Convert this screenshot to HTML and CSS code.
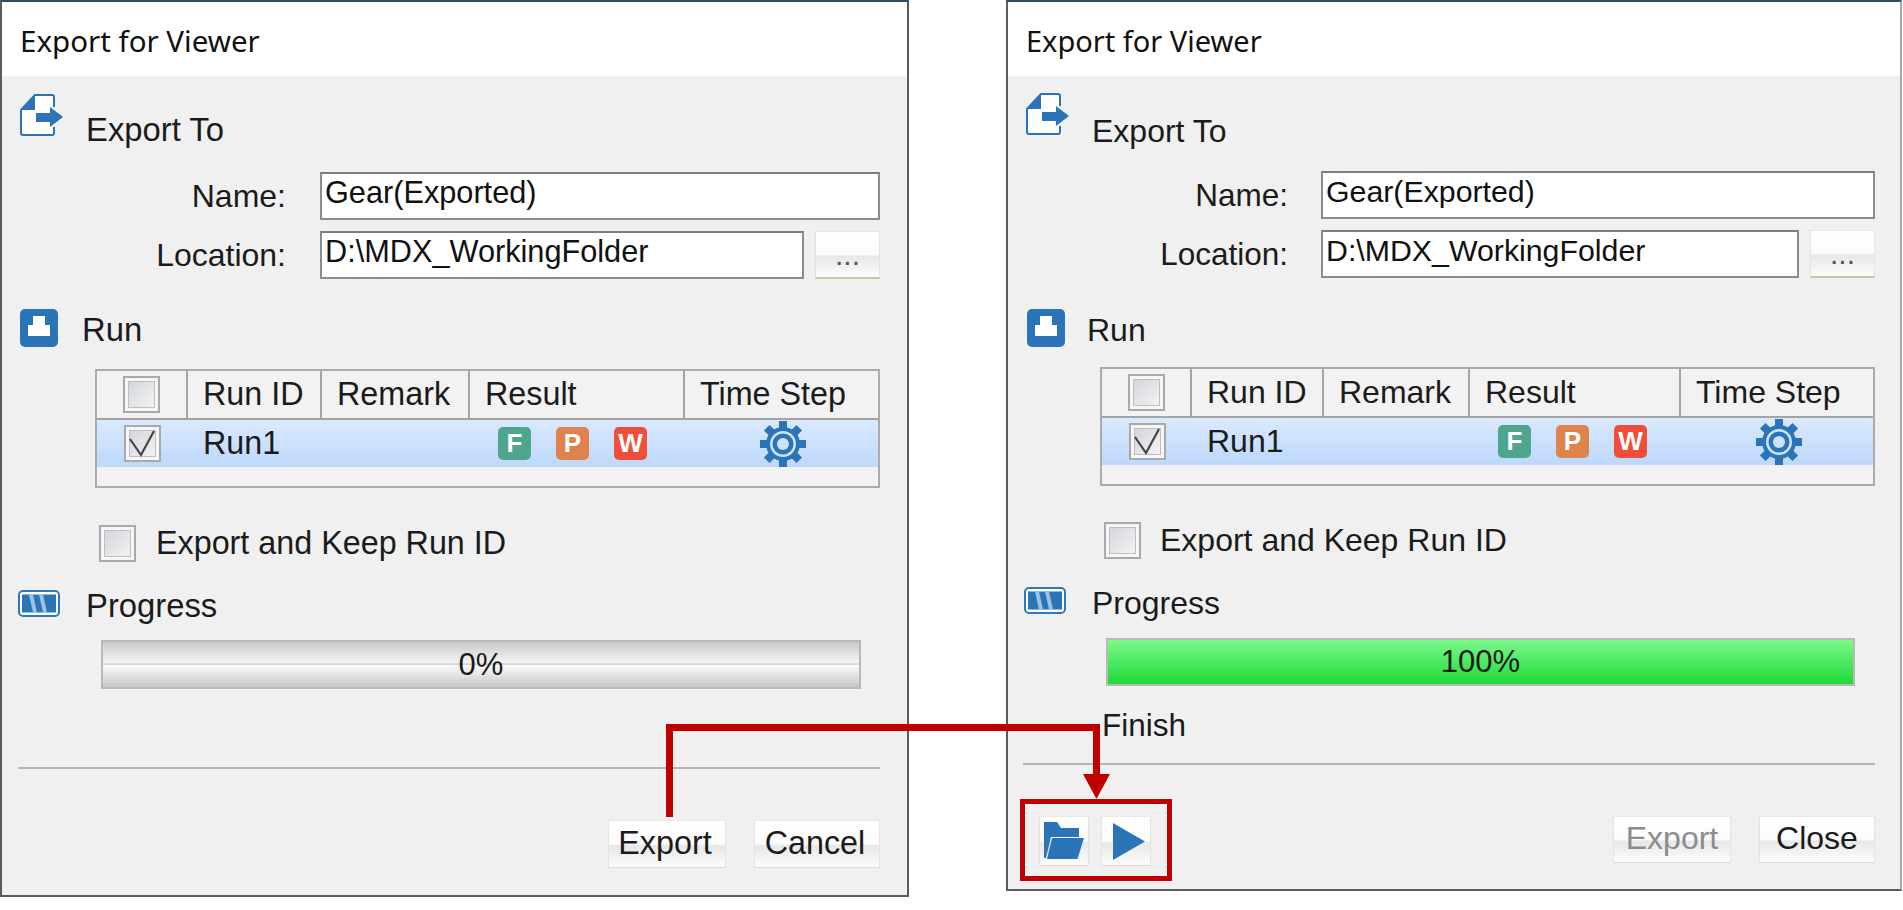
FILE: index.html
```html
<!DOCTYPE html>
<html lang="en">
<head>
<meta charset="utf-8">
<title>Export for Viewer</title>
<link rel="stylesheet" href="styles.css">
</head>
<body>
<main class="stage">

  <section class="dialog dialog-a">
    <header class="titlebar">Export for Viewer</header>
    <div class="head head-export">
      <svg class="ico ico-export" viewBox="0 0 43 42"><path class="ln" d="M34 13V3a2 2 0 0 0-2-2H15L1 16v23a2 2 0 0 0 2 2h29a2 2 0 0 0 2-2v-6"/><path class="fl" d="M0 16 15 0v16zM16 19h14v-6l13 10-13 10v-5H16z"/></svg>
      <span class="head-text">Export To</span>
    </div>
    <div class="form-row form-name"><span class="lbl">Name:</span><div class="field">Gear(Exported)</div></div>
    <div class="form-row form-loc"><span class="lbl">Location:</span><div class="loc"><div class="field">D:\MDX_WorkingFolder</div><div class="btn btn-dots">...</div></div></div>
    <div class="head head-run">
      <svg class="ico ico-run" viewBox="0 0 38 38"><rect width="38" height="38" rx="5" class="fl"/><path fill="#fff" d="M13 7h12v9h5v11H8V16h5z"/></svg>
      <span class="head-text">Run</span>
    </div>
    <div class="tbl">
      <div class="tr th">
        <div class="td td-c"><span class="cb"><span class="cb-in"></span></span></div>
        <div class="td">Run ID</div><div class="td">Remark</div><div class="td">Result</div><div class="td">Time Step</div>
      </div>
      <div class="tr sel">
        <div class="td td-c"><span class="cb"><span class="cb-in"><svg class="tick" viewBox="0 0 25 25"><path d="M0 8 11 24 24 0"/></svg></span></span></div>
        <div class="td">Run1</div><div class="td"></div>
        <div class="td td-badges"><span class="badge b-f">F</span><span class="badge b-p">P</span><span class="badge b-w">W</span></div>
        <div class="td td-gear"><svg class="gear" viewBox="0 0 48 46"><g class="fl"><rect x="20" y="0" width="8" height="46"/><rect x="20" y="0" width="8" height="46" transform="rotate(45 24 23)"/><rect x="20" y="0" width="8" height="46" transform="rotate(90 24 23)"/><rect x="20" y="0" width="8" height="46" transform="rotate(135 24 23)"/><circle cx="24" cy="23" r="17"/></g><circle cx="24" cy="23" r="13" fill="#cfe2fc"/><circle cx="24" cy="23" r="10.5" class="fl"/><circle cx="24" cy="23" r="6" fill="#cfe2fc"/></svg></div>
      </div>
    </div>
    <label class="keep"><span class="cb"><span class="cb-in"></span></span><span>Export and Keep Run ID</span></label>
    <div class="head head-progress">
      <svg class="ico ico-progress" viewBox="0 0 42 27"><rect x="1" y="1" width="40" height="25" rx="4" fill="#fff" stroke="#2e78bb" stroke-width="2"/><rect x="4" y="4.500" width="34" height="18" class="fl"/><path fill="#9dc3e4" d="M11 4.500h4l4 18h-4zM21 4.500h4l4 18h-4z"/></svg>
      <span class="head-text">Progress</span>
    </div>
    <div class="bar">0%</div>
    <hr class="rule">
    <div class="footer">
      <div class="actions"><div class="btn btn-text">Export</div><div class="btn btn-text btn-end">Cancel</div></div>
    </div>
  </section>

  <section class="dialog dialog-b">
    <header class="titlebar">Export for Viewer</header>
    <div class="head head-export">
      <svg class="ico ico-export" viewBox="0 0 43 42"><path class="ln" d="M34 13V3a2 2 0 0 0-2-2H15L1 16v23a2 2 0 0 0 2 2h29a2 2 0 0 0 2-2v-6"/><path class="fl" d="M0 16 15 0v16zM16 19h14v-6l13 10-13 10v-5H16z"/></svg>
      <span class="head-text">Export To</span>
    </div>
    <div class="form-row form-name"><span class="lbl">Name:</span><div class="field">Gear(Exported)</div></div>
    <div class="form-row form-loc"><span class="lbl">Location:</span><div class="loc"><div class="field">D:\MDX_WorkingFolder</div><div class="btn btn-dots">...</div></div></div>
    <div class="head head-run">
      <svg class="ico ico-run" viewBox="0 0 38 38"><rect width="38" height="38" rx="5" class="fl"/><path fill="#fff" d="M13 7h12v9h5v11H8V16h5z"/></svg>
      <span class="head-text">Run</span>
    </div>
    <div class="tbl">
      <div class="tr th">
        <div class="td td-c"><span class="cb"><span class="cb-in"></span></span></div>
        <div class="td">Run ID</div><div class="td">Remark</div><div class="td">Result</div><div class="td">Time Step</div>
      </div>
      <div class="tr sel">
        <div class="td td-c"><span class="cb"><span class="cb-in"><svg class="tick" viewBox="0 0 25 25"><path d="M0 8 11 24 24 0"/></svg></span></span></div>
        <div class="td">Run1</div><div class="td"></div>
        <div class="td td-badges"><span class="badge b-f">F</span><span class="badge b-p">P</span><span class="badge b-w">W</span></div>
        <div class="td td-gear"><svg class="gear" viewBox="0 0 48 46"><g class="fl"><rect x="20" y="0" width="8" height="46"/><rect x="20" y="0" width="8" height="46" transform="rotate(45 24 23)"/><rect x="20" y="0" width="8" height="46" transform="rotate(90 24 23)"/><rect x="20" y="0" width="8" height="46" transform="rotate(135 24 23)"/><circle cx="24" cy="23" r="17"/></g><circle cx="24" cy="23" r="13" fill="#cfe2fc"/><circle cx="24" cy="23" r="10.5" class="fl"/><circle cx="24" cy="23" r="6" fill="#cfe2fc"/></svg></div>
      </div>
    </div>
    <label class="keep"><span class="cb"><span class="cb-in"></span></span><span>Export and Keep Run ID</span></label>
    <div class="head head-progress">
      <svg class="ico ico-progress" viewBox="0 0 42 27"><rect x="1" y="1" width="40" height="25" rx="4" fill="#fff" stroke="#2e78bb" stroke-width="2"/><rect x="4" y="4.500" width="34" height="18" class="fl"/><path fill="#9dc3e4" d="M11 4.500h4l4 18h-4zM21 4.500h4l4 18h-4z"/></svg>
      <span class="head-text">Progress</span>
    </div>
    <div class="bar bar-done">100%</div>
    <div class="finish">Finish</div>
    <hr class="rule">
    <div class="footer">
      <div class="tools">
        <div class="btn btn-tool"><svg class="ico-folder" viewBox="0 0 40 38"><path class="fl" d="M0 0H13L17 6H35V15H7L2 36H0Z"/><path class="fl" d="M8 16H40L33.500 37H3Z"/></svg></div>
        <div class="btn btn-tool"><svg class="ico-play" viewBox="0 0 32 37"><path class="fl" d="M0 0 32 18.500 0 37Z"/></svg></div>
      </div>
      <div class="actions"><div class="btn btn-text btn-off">Export</div><div class="btn btn-text btn-end">Close</div></div>
    </div>
  </section>

  <svg class="callout" viewBox="0 0 1903 910">
    <path class="callout-line" d="M669.500 817V727.500H1096.500V776"/>
    <path class="callout-head" d="M1083 774H1110L1096.500 799Z"/>
    <rect class="callout-box" x="1022.500" y="801.500" width="147" height="77"/>
  </svg>

</main>
</body>
</html>
```
FILE: styles.css
```css
* { box-sizing: border-box; }

html, body { margin: 0; height: 100%; background: #fff; }

.stage {
  position: relative;
  display: flex;
  align-items: flex-start;
  width: 1903px;
  height: 910px;
  overflow: hidden;
  font-family: "Liberation Sans", Arial, sans-serif;
  color: #1b1b1b;
}

/* ---- dialog frame ---- */
.dialog {
  display: flex;
  flex-direction: column;
  flex: none;
  background: #f0f0f0;
  border: 2px solid #5c5c5c;
  border-top-color: #2f4a63;
}

.dialog-a {
  --fs: 32px;
  --fs-head: 32.800px;
  --fs-ui: 32.300px;
  --fs-field: 30.700px;
  --fs-title: 29.500px;
  --label-w: 284px;
  --label-gap: 34px;
  --inset: 27px;
  --cols: 91px 134px 148px 215px 1fr;
  --tbl-left: 93px;
  --gap-loc: 11px;
  --run-top: 30px;
  --tbl-top: 22px;
  --keep-top: 37px;
  --keep-left: 97px;
  --keep-gap: 20px;
  --prog-top: 28px;
  --bar-top: 23px;
  --bar-left: 99px;
  --bar-right: 46px;
  --bar-h: 49px;
  --rule-left: 16px;
  --export-top: 18px;
  --export-text: 18px;
  --run-pad: 18px;
  --run-gap: 24px;
  --head-gap: 23px;
  width: 909px;
  height: 897px;
}

.dialog-b {
  --fs: 31.500px;
  --fs-head: 32px;
  --fs-ui: 32px;
  --fs-field: 30.300px;
  --fs-title: 29px;
  --label-w: 280px;
  --label-gap: 33px;
  --inset: 25px;
  --cols: 90px 132px 146px 211px 1fr;
  --tbl-left: 92px;
  --gap-loc: 11px;
  --run-top: 31px;
  --tbl-top: 20px;
  --keep-top: 36px;
  --keep-left: 96px;
  --keep-gap: 19px;
  --prog-top: 28px;
  --bar-top: 24px;
  --bar-left: 98px;
  --bar-right: 45px;
  --bar-h: 48px;
  --rule-left: 15px;
  --export-top: 17px;
  --export-text: 20px;
  --run-pad: 19px;
  --run-gap: 22px;
  --head-gap: 23px;
  width: 896px;
  height: 891px;
  margin-left: 97px;
  border-right-color: #a8a8a8;
}

.titlebar {
  display: flex;
  align-items: center;
  height: 74px;
  padding: 2px 0 0 18px;
  background: #fff;
  color: #111;
  font-family: "Noto Sans", "Open Sans", sans-serif;
  font-size: var(--fs-title);
}

/* ---- section heads ---- */
.head {
  display: flex;
  align-items: flex-start;
  padding-left: 18px;
  font-size: var(--fs-head);
  line-height: 36px;
}

.ico { flex: none; display: block; }
.fl { fill: #2b74b7; }
.ln { fill: #fff; stroke: #2b74b7; stroke-width: 2; }

.head-export { margin-top: var(--export-top); height: 54px; }
.head-export .head-text { margin-top: var(--export-text); }
.ico-export { width: 43px; height: 42px; margin-right: var(--head-gap); }

.head-run { margin-top: var(--run-top); height: 38px; padding-left: var(--run-pad); }
.head-run .head-text { margin-top: 3px; }
.ico-run { width: 38px; height: 38px; margin-right: var(--run-gap); }

.head-progress { margin-top: var(--prog-top); height: 27px; padding-left: 16px; }
.head-progress .head-text { margin-top: -2px; }
.ico-progress { width: 42px; height: 27px; margin-right: 26px; }

/* ---- form ---- */
.form-row {
  display: grid;
  grid-template-columns: var(--label-w) 1fr;
  column-gap: var(--label-gap);
  align-items: center;
  padding-right: var(--inset);
  font-size: var(--fs);
}
.form-name { margin-top: 24px; }
.form-loc { margin-top: 11px; }
.lbl { text-align: right; }

.field {
  flex: 1;
  height: 48px;
  padding: 0 0 6px 3px;
  display: flex;
  align-items: center;
  background: #fff;
  border: 2px solid #8c8c8c;
  border-top-color: #7d7d7d;
  color: #111;
  font-size: var(--fs-field);
}

.loc { display: flex; gap: var(--gap-loc); }

/* ---- buttons ---- */
.btn {
  display: flex;
  align-items: center;
  justify-content: center;
  flex: none;
  background: linear-gradient(#fff 0, #fbfbfb 50%, #e7e7e7 54%, #fdfdfd 100%);
  border: 1px solid #e9e2d8;
  border-top-color: #efe8de;
  border-bottom-color: #e3d9c9;
}

.btn-dots {
  width: 65px;
  height: 48px;
  color: #555;
  font-size: 30px;
  border-bottom: 2px solid #cfc2a6;
}

.btn-text { width: 118px; height: 48px; font-size: var(--fs-ui); padding: 0 4px 2px 0; }
.btn-end { width: 126px; }
.dialog-b .btn-text { height: 47px; padding-right: 0; }
.dialog-b .btn-end { width: 116px; }
.btn-off { color: #8c8c8c; }

.btn-tool { width: 50px; height: 50px; }
.ico-folder { width: 40px; height: 38px; }
.ico-play { width: 32px; height: 37px; margin-left: 6px; }

/* ---- table ---- */
.tbl {
  margin: var(--tbl-top) var(--inset) 0 var(--tbl-left);
  height: 119px;
  background: #f2f2f2;
  border: 2px solid #ababab;
  font-size: var(--fs-ui);
}

.tr {
  display: grid;
  grid-template-columns: var(--cols);
}

.th { height: 49px; border-bottom: 2px solid #a4a4a4; }
.th .td { border-right: 2px solid #a4a4a4; }
.th .td:last-child { border-right: 0; }
.sel { height: 47px; background: linear-gradient(#dbe9fd, #bcd8fb); }

.td {
  display: flex;
  align-items: center;
  min-width: 0;
  padding-left: 15px;
  white-space: nowrap;
}
.td-c { justify-content: center; padding-left: 0; }
.td-badges { gap: 25px; padding-left: 28px; }
.td-gear { justify-content: center; padding-left: 3px; }
.gear { width: 48px; height: 46px; }

.badge {
  display: flex;
  align-items: center;
  justify-content: center;
  width: 33px;
  height: 33px;
  border-radius: 5px;
  color: #fff;
  font-size: 26px;
  font-weight: 700;
}
.b-f { background: #4fa58d; }
.b-p { background: #e0824e; }
.b-w { background: #f04e3a; }

/* ---- checkbox ---- */
.cb {
  display: block;
  flex: none;
  width: 37px;
  height: 37px;
  padding: 3px;
  background: #f6f6f6;
  border: 2px solid #a9a9a9;
}
.cb-in {
  display: block;
  width: 100%;
  height: 100%;
  background: linear-gradient(135deg, #d3d6db, #f2f2f2);
  border: 1px solid #bcc0c6;
}
.tick { display: block; width: 100%; height: 100%; overflow: visible; }
.tick path { fill: none; stroke: #444; stroke-width: 2.200; }

.keep {
  display: flex;
  align-items: center;
  gap: var(--keep-gap);
  margin: var(--keep-top) 0 0 var(--keep-left);
  font-size: var(--fs-ui);
}

/* ---- progress ---- */
.bar {
  display: flex;
  align-items: center;
  justify-content: center;
  height: var(--bar-h);
  margin: var(--bar-top) var(--bar-right) 0 var(--bar-left);
  border: 2px solid #b9b9b9;
  background: linear-gradient(#c9c9c9 0, #f5f5f5 47%, #d6d6d6 48%, #d6d6d6 51%, #fafafa 52%, #c8c8c8 100%);
  font-size: 31px;
}
.bar-done { background: linear-gradient(#7cf98b, #1ed93a); }

.finish {
  margin: 21px 0 0 94px;
  font-size: 31.500px;
  line-height: 36px;
}

.rule {
  height: 2px;
  margin: 78px var(--inset) 0 var(--rule-left);
  border: 0;
  background: #b5b5b5;
}
.finish + .rule { margin-top: 20px; }

/* ---- footer ---- */
.footer {
  display: flex;
  align-items: flex-start;
  margin-top: 51px;
  padding: 0 var(--inset) 0 31px;
}
.tools { display: flex; gap: 12px; }
.actions { display: flex; gap: 28px; margin-left: auto; }

/* ---- annotation drawn over both dialogs ---- */
.callout {
  position: absolute;
  left: 0;
  top: 0;
  width: 1903px;
  height: 910px;
  pointer-events: none;
}
.callout-line { fill: none; stroke: #c00000; stroke-width: 7; }
.callout-head { fill: #c00000; }
.callout-box { fill: none; stroke: #c00000; stroke-width: 5; }
```
